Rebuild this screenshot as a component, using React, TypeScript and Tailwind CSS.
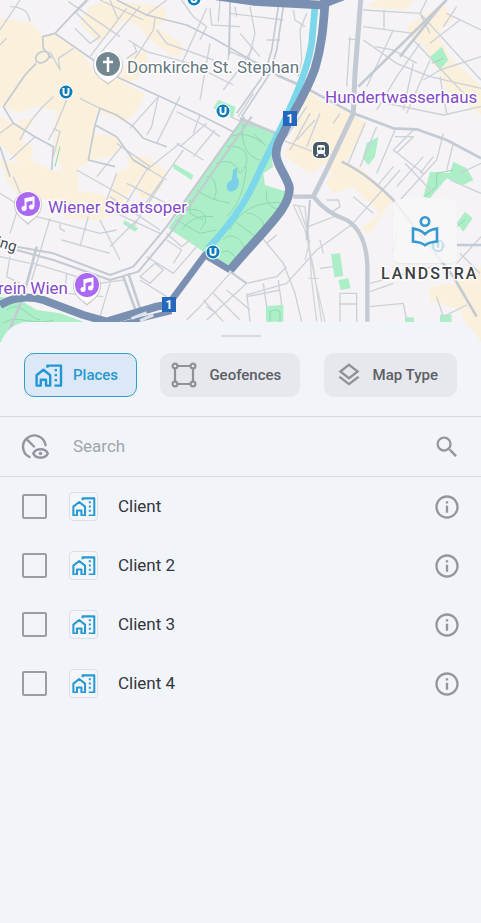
import React, { useState } from 'react';
import { MdInfoOutline, MdOutlineLayers, MdSearch } from 'react-icons/md';

interface Place {
  id: number;
  name: string;
}

interface IconProps {
  className?: string;
}

const places: Place[] = [
  { id: 1, name: 'Client' },
  { id: 2, name: 'Client 2' },
  { id: 3, name: 'Client 3' },
  { id: 4, name: 'Client 4' },
];

const HomeWorkIcon: React.FC<IconProps> = ({ className }) => (
  <svg viewBox="0 0 28 23" fill="none" stroke="currentColor" strokeWidth="2.4" strokeLinejoin="round" className={className}>
    <path d="M1.6 11.2 8.4 5.8l6.800 5.4v10.400h-4.200v-5.8H5.8v5.8H1.6z" />
    <path d="M12.4 3.800V1.6h13.600v20H19.500" />
    <path d="M20.800 5v2.200M20.800 10v2.200M20.800 15v2.200" />
  </svg>
);

const GeofenceIcon: React.FC<IconProps> = ({ className }) => (
  <svg viewBox="0 0 26 26" fill="none" stroke="currentColor" strokeWidth="2.2" className={className}>
    <path d="M7 4h12M7 22h12M4 7v12M22 7v12" />
    <circle cx="4" cy="4" r="2.4" />
    <circle cx="22" cy="4" r="2.4" />
    <circle cx="4" cy="22" r="2.4" />
    <circle cx="22" cy="22" r="2.4" />
  </svg>
);

const VisibilityIcon: React.FC<IconProps> = ({ className }) => (
  <svg viewBox="0 0 28 26" fill="none" stroke="currentColor" strokeWidth="2.4" strokeLinecap="round" className={className}>
    <path d="M8.500 23A11.300 11.300 0 1 1 24.500 11.200" />
    <path d="m5.500 5 7.500 7.500" />
    <path d="M12.300 19.500c2.500-5.600 12-5.600 14.500 0-2.500 5.600-12 5.600-14.500 0z" />
    <circle cx="19.500" cy="19.500" r="1.800" fill="currentColor" stroke="none" />
  </svg>
);

const ReaderIcon: React.FC<IconProps> = ({ className }) => (
  <svg viewBox="0 0 28 32" fill="none" stroke="currentColor" strokeWidth="2.600" className={className}>
    <circle cx="14" cy="6.500" r="4.200" />
    <path d="M2 13.500c5 .6 9 2.600 12 5.600 3-3 7-5 12-5.600v13c-5 .3-9 1.500-12 3.700-3-2.200-7-3.400-12-3.700z" />
  </svg>
);

const MusicPin: React.FC<{ x: number; y: number }> = ({ x, y }) => (
  <g transform={`translate(${x} ${y})`}>
    <path d="M0 20C-3 16-14 11-14 0a14 14 0 0 1 28 0C14 11 3 16 0 20z" fill="#b5b1bd" opacity=".6" />
    <path d="M0 18C-3 14-13 11-13-1a13 13 0 0 1 26 0C13 11 3 14 0 18z" fill="#fff" />
    <circle cy="-1" r="12" fill="#ab68f2" />
    <path d="M-2.5 3.5V-6L5.5-7.500V2" fill="none" stroke="#fff" strokeWidth="2" />
    <path d="M-2.500-4.500 5.500-6" stroke="#fff" strokeWidth="3" />
    <circle cx="-4" cy="3.500" r="2.500" fill="#fff" />
    <circle cx="3.500" cy="2" r="2.500" fill="#fff" />
  </g>
);

const MetroSign: React.FC<{ x: number; y: number }> = ({ x, y }) => (
  <g transform={`translate(${x} ${y})`}>
    <circle r="7.500" fill="#fff" />
    <circle r="6.500" fill="#0c7cba" />
    <path d="M-2.500-4V0.500a2.500 2.500 0 0 0 5 0V-4" fill="none" stroke="#fff" strokeWidth="2" />
  </g>
);

const RouteSign: React.FC<{ x: number; y: number }> = ({ x, y }) => (
  <g>
    <rect x={x - 7} y={y - 7} width="14" height="15" fill="#2567bd" />
    <text x={x} y={y + 5} textAnchor="middle" fontSize="12" fontWeight="700" fill="#fff">1</text>
  </g>
);

// Streets are drawn on a grid three times finer than the labels
const Streets: React.FC = () => (
  <g transform="scale(0.33333)" fill="none" strokeLinejoin="round">
    {/* Commercial areas */}
    <g fill="#faf0dc">
      <path d="M0 55 95 70 130 110 170 100 210 130 250 165 290 230 360 240 435 285 420 320 380 365 290 335 285 400 350 410 365 440 345 465 285 480 235 500 235 570 330 590 350 520 390 500 380 470 440 470 500 515 480 570 430 600 400 560 350 640 300 660 200 655 150 600 60 590 20 540 0 480 60 490 40 470 0 430V350L40 370 100 350 130 320 60 420 100 440 90 480 150 510 190 520 160 440 170 330 100 320 60 340 10 320 0 320z" />
      <path d="M265 20 330 0 400 10 490 20 500 60 465 80 545 130 550 160 520 170 440 110 420 80 370 60 300 130 240 70zM350 250 390 165 440 150 440 190 410 240z" />
      <path d="M925 270 970 310 1055 340 1100 370 1060 450 1030 500 1000 520 980 490 930 520 850 465 890 380z" />
      <path d="M1220 80 1265 50 1330 10 1360 60 1310 100 1350 170 1443 260V345L1340 270 1270 130 1225 110z" />
      <path d="M1010 490 1080 500 1160 580 1190 600 1160 620 1110 700 1080 690 1140 640 1060 560 1000 580 980 550z" />
      <path d="M1290 860 1370 850 1443 800V1026L1410 990 1380 930 1290 900zM1100 20 1130 0H1240L1220 30z" />
    </g>

    {/* Parks */}
    <g fill="#aceec8">
      <path d="M725 362 840 405 815 480 820 500 790 520 795 555 860 575 860 620 700 800 625 770 600 748 505 685 560 600z" />
      <path d="M655 300 706 320 700 352 640 325zM1290 170 1325 140 1345 180 1320 210zM1100 430 1135 410 1125 470 1105 495 1088 475zM520 490 580 525 575 540 520 505zM372 660 415 685 405 695 370 672z" />
      <path d="M1290 515 1350 520 1360 485 1400 505 1420 540 1390 555 1340 535 1290 595 1270 590zM1370 670 1395 635 1418 655 1390 695zM993 762 1020 760 1030 828 1003 832zM1015 840 1045 835 1052 865 1022 870zM798 918 850 915V965H798zM1215 952H1242V970H1215zM1320 944H1355V970H1320z" />
      <path d="M0 890 60 900 110 930 180 940 250 965 100 1035H0z" />
    </g>
    <g stroke="#8ed8ae" strokeWidth="3">
      <path d="M690 410Q740 390 790 430M680 440C740 430 760 480 720 520M650 490Q700 470 720 520M620 530C640 520 660 570 640 600M590 570Q630 600 690 610M560 630C600 620 640 650 600 690M530 660 600 700 650 690M545 690Q580 640 640 650M730 370C720 430 740 470 780 480M760 400 800 440M740 500C730 570 720 610 680 650M690 690C720 620 800 600 850 610M740 640C790 640 800 690 790 700M700 660Q740 690 780 720M670 720C690 690 740 720 730 760M660 760Q690 740 710 780M800 570Q790 620 840 630M570 600V640L610 660" />
      <path d="M20 930C60 900 80 950 120 960M10 970C50 940 100 980 160 960M810 965V935Q825 925 840 935V965M165 500 180 440" />
      <path d="M1295 190 1330 175M1275 590 1310 560V520L1360 510M1370 680 1395 660" />
    </g>

    {/* Small streets */}
    <g stroke="#ccd1d9" strokeWidth="4">
      <path d="M0 90 60 0M30 20Q85 20 90 65M0 135 20 115M205 5 360 110M230 40 300 110 270 130 225 85M300 0 430 60M380 25 270 170M420 20 300 160M330 0 355 60M225 40 265 0" />
      <path d="M150 155 180 210 175 175 220 145M465 55 460 90 405 175M385 120 440 155 570 190 700 255M400 130 410 155 380 175M470 90 500 130 640 180M630 130 600 300M620 25 550 180 540 200M545 0 580 50 620 80 600 120M630 25 635 75 720 80" />
      <path d="M660 0 655 65M440 45 500 0M240 295 300 325M475 290 390 385M475 290 455 380 440 405M540 290 470 430M530 335 610 375 660 410M600 345 580 400M540 430 440 510M530 430 610 480M645 390 580 470M620 370 540 440M670 270 730 190 760 140M690 155 800 200M690 20 685 180M705 20 710 50" />
      <path d="M160 290Q90 350 60 420M200 300 165 385 145 420M160 385 180 395 160 470M105 410 30 480M40 370 0 400M230 510 390 600M450 500 350 430M440 510 360 640M490 540 400 680M550 450 430 620M400 480 500 540M365 440 290 530M380 550 500 610M330 590 480 690M350 520 320 600" />
      <path d="M40 530 65 590 30 700M0 580 110 650 300 700M150 655 95 840M180 665V685L195 695M265 650 240 740M185 720 330 760M300 660 360 780M410 660 330 740M300 700 350 690M350 640 480 700M500 700 545 740 570 720M520 790 545 750 500 720M465 790 490 810 450 850 420 830ZM440 770 520 820 590 740M420 840 500 890M100 790 200 820 260 840M30 770 20 830 60 850M200 820 195 870M330 850 300 950M300 850 370 840M0 770 90 790M200 880 310 890" />
      <path d="M690 820 600 920 560 960M740 850 620 960M640 880 720 960M610 900 670 965M680 870 750 930M650 940 620 920M740 880 750 965M740 850 830 830 860 800M740 890 840 870M790 850 800 920M835 840 845 915M780 705 850 790 885 880 905 965M800 730 830 705" />
      <path d="M750 20 765 100 745 180M690 40 850 60M880 30 885 60 915 80M920 40 900 90 905 180 895 230M720 100 780 170M800 120H840M715 350 760 280M760 380 690 350M945 360 890 420M920 320 860 410" />
      <path d="M1050 110 1040 260M1045 118H1070M1090 30 1260 40M1152 30V90M1090 80 1240 100M1090 120 1190 190 1290 230 1443 265M1125 140 1180 150 1250 190M1180 90 1100 260M1260 130 1190 230 1130 330M1290 180 1220 340M1240 120 1400 290M1260 40 1360 150 1443 240M1240 190 1210 330M1320 230 1340 340M1443 170 1320 210 1270 240M1380 60 1290 130M1340 40 1443 90M1370 20 1330 80M1280 0 1260 40 1290 100M1160 310 1330 345 1443 320" />
      <path d="M930 340 870 450M960 340 920 440M845 420 980 470M1020 340 1000 370M1095 370 1045 490M1130 380 1080 500M1185 390 1130 520M1185 410H1240L1190 460M1240 390 1180 450 1270 520M1270 470 1190 560M1215 490 1300 580M1300 470 1260 520M1330 400 1310 480 1200 600M1180 500 1130 560M1360 430 1340 510M1350 540 1443 580M1443 490 1380 520M1200 510 1050 680M1060 590 1120 640M980 600 1015 600 1020 620 990 640M925 680 1015 645" />
      <path d="M740 885 860 850 950 750 1060 670M960 720 970 760M960 805 1000 800M1020 965V880H1070V965M1020 912H1070M1110 850 1300 800M1110 920 1210 910 1220 960M1110 875 1180 850M1310 890 1330 950 1400 915M1370 790 1443 710M1190 700 1180 750M1380 760 1440 820" />
    </g>

    {/* Railway */}
    <g stroke="#d3d5da" strokeWidth="4">
      <path d="M880 615 915 690 940 800 965 965M895 615 925 700 935 840 950 965M915 620 925 740 950 860 975 965M880 615 915 620M925 835H955M930 720 915 780" />
    </g>

    {/* Main streets */}
    <g stroke="#c3cad3" strokeWidth="8">
      <path d="M10 320 75 225 108 190M155 175 130 145 128 110 165 100 240 20 260 0M145 158C120 145 100 170 110 185 125 195 155 180 145 158M10 320 40 370 105 410 160 440 155 510" strokeWidth="5" />
      <path d="M165 100 280 180 360 235 470 285 600 345 700 395M350 0 440 45 560 75 640 115 830 225M690 0 688 165M300 325 350 345 400 380 430 415 500 440M300 325 285 375 350 410 400 480 450 510M285 375 265 480 345 500M0 440 30 530" strokeWidth="5" />
      <path d="M733 350 500 680 400 800 330 825 160 760 50 740M755 350 510 700 415 815 330 840 160 780 50 750" strokeWidth="6" />
      <path d="M850 20 830 150 810 220 725 350M835 20 815 150 795 220 710 340" strokeWidth="5" />
      <path d="M110 740 70 890 20 1010M370 830 410 940M385 820 425 940M1200 170 1320 20" />
      <path d="M830 225 920 265 1060 340 1180 385 1250 388 1340 420 1443 475M720 355 840 405" />
      <path d="M1075 260 1340 0M1025 485Q1100 520 1180 600L1360 830 1430 950M1370 735H1443" />
      <path d="M1082 0 1065 220 1060 340 980 510 940 590" strokeWidth="15" />
      <path d="M880 590H940Q980 640 1040 660C1090 690 1105 750 1102 830V965" strokeWidth="13" />
      <path d="M930 600 920 720M690 815 740 850" strokeWidth="6" />
    </g>

    {/* Danube canal and park pond */}
    <path d="M945 20 935 130C920 220 885 290 850 370L780 510C750 580 720 640 625 745" stroke="#7bd7e9" strokeWidth="20" />
    <path d="M700 508 712 503 710 530C725 545 715 570 695 575 675 575 675 548 695 540z" fill="#7bcfe6" />

    {/* Ring road */}
    <g stroke="#7990b2">
      <path d="M650-12 760 4 960 15 1030-12" strokeWidth="26" />
      <path d="M975 10C970 80 965 140 945 205 915 290 875 340 850 400 800 480 850 500 868 560 875 620 800 680 690 810" strokeWidth="26" />
      <path d="M690 810 615 765 515 900" strokeWidth="20" />
      <path d="M515 912 470 920 320 965 250 945 130 900Q60 880 0 915" strokeWidth="24" />
      <path d="M515 935 350 975" strokeWidth="14" />
    </g>
    <path d="M395 955 440 938M420 962 460 945" stroke="#dce2ea" strokeWidth="9" />
  </g>
);

const CityMap: React.FC = () => (
  <svg
    viewBox="0 0 481 342"
    preserveAspectRatio="xMidYMid slice"
    className="block h-[342px] w-full bg-[#f5f3f5] font-['Roboto',sans-serif]"
    role="img"
    aria-label="Map of Vienna"
  >
    <Streets />

    <MetroSign x={66} y={92} />
    <MetroSign x={223} y={111} />
    <MetroSign x={194} y={-1} />
    <MetroSign x={213} y={252} />
    <MetroSign x={438} y={246} />
    <RouteSign x={290} y={118} />
    <RouteSign x={169} y={304} />
    <MusicPin x={28} y={205} />
    <MusicPin x={87} y={286} />

    {/* Cathedral pin */}
    <g transform="translate(108 65)">
      <path d="M0 20C-3 16-15 12-15 0a15 15 0 0 1 30 0C15 12 3 16 0 20z" fill="#b5b1bd" opacity=".6" />
      <path d="M0 18C-3 15-14 11-14-1a14 14 0 0 1 28 0C14 11 3 15 0 18z" fill="#fff" />
      <circle cy="-1" r="12" fill="#738791" />
      <path d="M0-8V7M-5-3H5" stroke="#fff" strokeWidth="2.500" />
    </g>

    {/* Train station */}
    <g transform="translate(321 150)">
      <rect x="-9" y="-9" width="18" height="18" rx="6" fill="#fff" />
      <rect x="-8" y="-8" width="16" height="16" rx="5" fill="#465967" />
      <rect x="-4" y="-5" width="8" height="9" rx="2" fill="#fff" />
      <path d="M-3-2.500H-.5V0H-3zM.5-2.500H3V0H.5z" fill="#465967" />
      <path d="m-3 4-1.500 2M3 4l1.500 2" stroke="#fff" strokeWidth="1.500" />
    </g>

    <g fontSize="17" stroke="#fff" strokeWidth="3" strokeLinejoin="round" paintOrder="stroke">
      <text x="127" y="73" fill="#65777f">Domkirche St. Stephan</text>
      <g fill="#8249c8">
        <text x="325" y="103">Hundertwasserhaus</text>
        <text x="48" y="213">Wiener Staatsoper</text>
        <text x="68" y="294" textAnchor="end">rein Wien</text>
      </g>
      <text x="15" y="252" fontSize="15" fill="#444b55" textAnchor="end" transform="rotate(17 15 252)">ing</text>
      <text x="381" y="279" fontSize="16" fontWeight="500" letterSpacing="2" fill="#3c4043">LANDSTRA</text>
    </g>
  </svg>
);

const App: React.FC = () => {
  const [activeTab, setActiveTab] = useState('places');
  const [search, setSearch] = useState('');
  const [checked, setChecked] = useState<number[]>([]);

  const togglePlace = (id: number) => {
    setChecked((prev) => (prev.includes(id) ? prev.filter((item) => item !== id) : [...prev, id]));
  };

  const tabs = [
    { id: 'places', label: 'Places', icon: <HomeWorkIcon className="w-7" />, padding: 'pl-[10px] pr-[18px] gap-[10px]' },
    { id: 'geofences', label: 'Geofences', icon: <GeofenceIcon className="w-[26px]" />, padding: 'pl-[10px] pr-[18px] gap-3' },
    { id: 'map-type', label: 'Map Type', icon: <MdOutlineLayers className="h-[28px] w-[28px]" />, padding: 'pl-[10px] pr-[18px] gap-[10px]' },
  ];

  const visiblePlaces = places.filter((place) => place.name.toLowerCase().includes(search.toLowerCase()));

  return (
    <div className="flex min-h-screen flex-col bg-[#f1f4f9] font-['Roboto',sans-serif]">
      <header className="relative">
        <CityMap />
        <button
          aria-label="Map legend"
          className="absolute right-6 top-[199px] flex h-16 w-16 items-center justify-center rounded-md bg-[#f8f8f8]/80 text-[#3499d0] shadow-xs"
        >
          <ReaderIcon className="w-7" />
        </button>
      </header>

      {/* Bottom sheet */}
      <main className="relative -mt-5 flex-1 rounded-t-[28px] bg-[#f1f4f9]">
        <div className="mx-auto h-[31px] w-10 pt-[13px]">
          <div className="h-[2px] rounded bg-[#d7dae1]"></div>
        </div>

        <nav className="flex justify-between px-6 pb-[19px]">
          {tabs.map((tab) => (
            <button
              key={tab.id}
              onClick={() => setActiveTab(tab.id)}
              className={`flex h-11 items-center rounded-[10px] border text-[15px] font-medium ${tab.padding} ${
                activeTab === tab.id
                  ? 'border-[#2f9fc6] bg-[#dce8f6] text-[#2699d3]'
                  : 'border-[#e6e8ed] bg-[#e6e8ed] text-[#5c5f66]'
              }`}
            >
              <span className={activeTab === tab.id ? 'text-[#1f97d4]' : 'text-[#8e9197]'}>{tab.icon}</span>
              {tab.label}
            </button>
          ))}
        </nav>

        {/* Search */}
        <div className="flex h-[61px] items-center border-y border-[#d5d8de] pl-[21px] pr-5 text-[#93969c]">
          <button aria-label="Toggle visibility">
            <VisibilityIcon className="w-7" />
          </button>
          <input
            type="text"
            aria-label="Search"
            placeholder="Search"
            value={search}
            onChange={(e) => setSearch(e.target.value)}
            className="ml-6 min-w-0 flex-1 bg-transparent text-[17px] text-[#34373d] outline-none placeholder:text-[#a2a5ab]"
          />
          <button aria-label="Run search">
            <MdSearch className="h-7 w-7" />
          </button>
        </div>

        {/* Places list */}
        <ul>
          {visiblePlaces.map((place) => (
            <li key={place.id} className="flex h-[59px] items-center pl-[22px] pr-5">
              <input
                id={`place-${place.id}`}
                type="checkbox"
                checked={checked.includes(place.id)}
                onChange={() => togglePlace(place.id)}
                className="h-[25px] w-[25px] appearance-none rounded-[2px] border-2 border-[#9b9da2] checked:bg-[#2699d3]"
              />
              <label htmlFor={`place-${place.id}`} className="ml-[22px] flex flex-1 items-center gap-5 text-[17px] text-[#34373d]">
                <span className="flex h-[29px] w-[29px] items-center justify-center rounded border border-[#dcdfe5] bg-[#f4f6fa] text-[#2699d3]">
                  <HomeWorkIcon className="w-6" />
                </span>
                {place.name}
              </label>
              <button aria-label={`About ${place.name}`} className="text-[#93969c]">
                <MdInfoOutline className="h-7 w-7" />
              </button>
            </li>
          ))}
        </ul>
      </main>
    </div>
  );
};

export default App;
